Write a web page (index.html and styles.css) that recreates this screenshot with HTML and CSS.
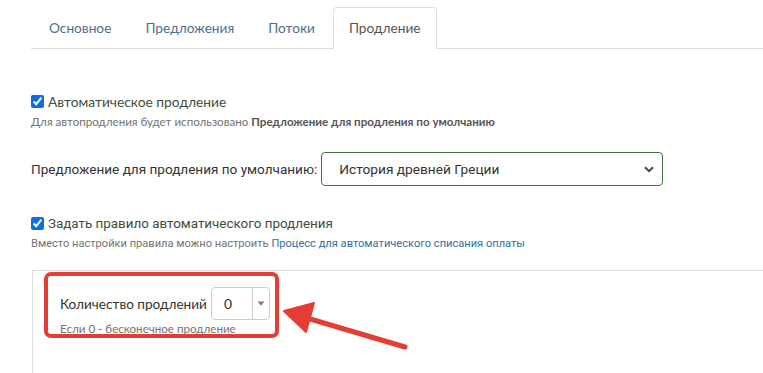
FILE: index.html
```html
<!DOCTYPE html>
<html lang="ru">
<head>
<meta charset="utf-8">
<title>Продление</title>
<link rel="stylesheet" href="styles.css">
</head>
<body>
<div class="page">
  <ul class="tabs">
    <li class="tab"><a href="#">Основное</a></li>
    <li class="tab"><a href="#">Предложения</a></li>
    <li class="tab"><a href="#">Потоки</a></li>
    <li class="tab active"><a href="#">Продление</a></li>
  </ul>

  <div class="content">
    <label class="check-row first">
      <input type="checkbox" checked>
      <span class="check-label">Автоматическое продление</span>
    </label>
    <div class="help geo">Для автопродления будет использовано <b>Предложение для продления по умолчанию</b></div>

    <div class="select-row">
      <label class="select-label">Предложение для продления по умолчанию:</label>
      <div class="select">
        <span class="select-value">История древней Греции</span>
        <svg class="chev" width="10" height="7" viewBox="0 0 10 7"><path d="M1 1.2 L5 5.2 L9 1.2" fill="none" stroke="#444" stroke-width="2"/></svg>
      </div>
    </div>

    <label class="check-row second">
      <input type="checkbox" checked>
      <span class="check-label rob">Задать правило автоматического продления</span>
    </label>
    <div class="help rob">Вместо настройки правила можно настроить <a href="#">Процесс для автоматического списания оплаты</a></div>

    <div class="panel">
      <div class="count-row">
        <span class="count-label">Количество продлений</span>
        <div class="spinner">
          <span class="spin-value">0</span>
          <span class="spin-btn"><svg width="8" height="5" viewBox="0 0 8 5"><polygon points="0.5,0.5 7.5,0.5 4,4.8" fill="#808080"/></svg></span>
        </div>
      </div>
      <div class="help geo count-help">Если 0 - бесконечное продление</div>
    </div>
  </div>

  <div class="highlight"></div>
  <svg class="arrow" width="763" height="373" viewBox="0 0 763 373">
    <line x1="405" y1="347" x2="300" y2="316" stroke="#e43d33" stroke-width="5" stroke-linecap="round"/>
    <polygon points="284,311 314,303 306,332" fill="#e43d33" stroke="#e43d33" stroke-width="2" stroke-linejoin="round"/>
  </svg>
</div>
</body>
</html>
```

FILE: styles.css
```css
html, body {
  margin: 0;
  padding: 0;
  background: #fff;
  overflow: hidden;
}

.page {
  position: relative;
  width: 763px;
  height: 373px;
  overflow: hidden;
  font-family: "Lato", "Open Sans", sans-serif;
  color: #333;
}

.tabs {
  list-style: none;
  margin: 7px 0 0 31px;
  padding: 0;
  display: flex;
  border-bottom: 1px solid #ddd;
  height: 41px;
}

.tab {
  margin-right: 2px;
  margin-bottom: -1px;
}

.tab a {
  display: block;
  height: 41px;
  box-sizing: border-box;
  padding: 0 15px;
  line-height: 40px;
  font-size: 13.7px;
  color: #4d6f8f;
  text-decoration: none;
  border: 1px solid transparent;
  border-radius: 4px 4px 0 0;
}

.tab:first-child a { margin-left: 2px; }

.tab.active a {
  color: #555;
  background: #fff;
  border-color: #ddd;
  border-bottom-color: #fff;
  height: 42px;
}

.content {
  margin-left: 31px;
}

.check-row {
  display: flex;
  align-items: center;
  height: 20px;
}

.check-row.first { margin-top: 42px; }
.check-row.second { margin-top: 27px; }

.check-row input {
  margin: 0 4px 0 0;
  width: 13px;
  height: 13px;
  accent-color: #0b6ee8;
}

.check-label {
  font-size: 13.8px;
  color: #3e4d3c;
}

.check-label.rob {
  font-family: "Roboto", sans-serif;
  font-size: 13.4px;
}

.help {
  margin-top: 3px;
  line-height: 16px;
  font-size: 11.6px;
  color: #737373;
}

.help b {
  color: #555;
  font-weight: 700;
}

.help.rob {
  font-family: "Roboto", sans-serif;
  font-size: 11.1px;
}

.help a {
  color: #2f6fa6;
  text-decoration: none;
}

.select-row {
  margin-top: 22px;
  display: flex;
  align-items: center;
  height: 34px;
}

.select-label {
  font-family: "Roboto", sans-serif;
  font-size: 13.55px;
  color: #333;
  margin-right: 4px;
}

.select {
  box-sizing: border-box;
  width: 342px;
  height: 34px;
  border: 1px solid #3c763d;
  border-radius: 4px;
  display: flex;
  align-items: center;
  justify-content: space-between;
  padding: 0 8px 0 17px;
}

.select-value {
  font-family: "Roboto", sans-serif;
  font-size: 13.7px;
  color: #333;
}

.panel {
  margin-top: 18px;
  margin-left: 1px;
  margin-right: -20px;
  border: 1px solid #ddd;
  height: 200px;
  padding: 16px 0 0 27px;
}

.count-row {
  display: flex;
  align-items: center;
  height: 33px;
}

.count-label {
  font-size: 13.6px;
  color: #333;
  margin-right: 4px;
}

.spinner {
  box-sizing: border-box;
  width: 59px;
  height: 33px;
  border: 1px solid #ccc;
  border-radius: 4px;
  display: flex;
}

.spin-value {
  width: 41px;
  box-sizing: border-box;
  padding-left: 12px;
  line-height: 31px;
  font-size: 14px;
  color: #333;
  border-right: 1px solid #ccc;
}

.spin-btn {
  flex: 1;
  display: flex;
  align-items: center;
  justify-content: center;
}

.count-help {
  margin-top: 1px;
}

.highlight {
  position: absolute;
  left: 44px;
  top: 272px;
  width: 235px;
  height: 66px;
  box-sizing: border-box;
  border: 4px solid #e43d33;
  border-radius: 7px;
}

.arrow {
  position: absolute;
  left: 0;
  top: 0;
}
```
